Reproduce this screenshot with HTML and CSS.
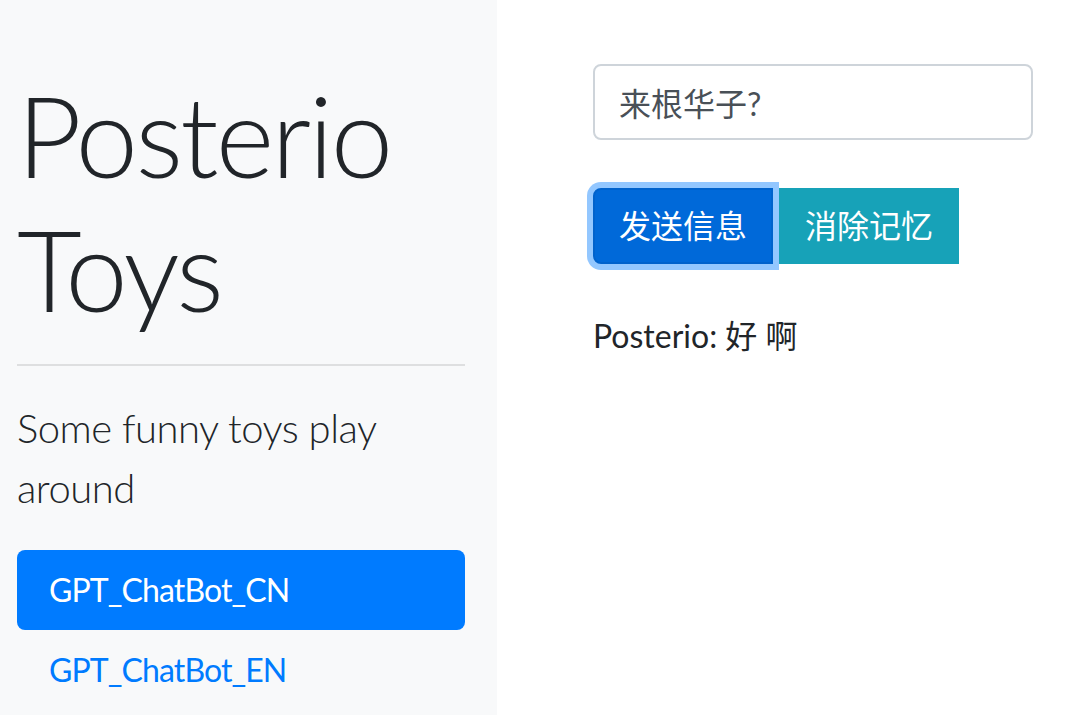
FILE: index.html
```html
<!DOCTYPE html>
<html lang="zh">
<head>
<meta charset="utf-8">
<title>Posterio Toys</title>
<link rel="stylesheet" href="styles.css">
</head>
<body>
<div class="layout">
  <aside class="sidebar">
    <h1 class="display">Posterio Toys</h1>
    <hr class="divider">
    <p class="lead">Some funny toys play around</p>
    <nav class="nav">
      <a class="nav-link active" href="#">GPT_ChatBot_CN</a>
      <a class="nav-link" href="#">GPT_ChatBot_EN</a>
    </nav>
  </aside>
  <main class="main">
    <input class="form-control" type="text" value="来根华子?">
    <div class="actions">
      <button class="btn btn-primary" type="button">发送信息</button>
      <button class="btn btn-info" type="button">消除记忆</button>
    </div>
    <p class="reply">Posterio: 好 啊</p>
  </main>
</div>
</body>
</html>
```
FILE: styles.css
```css
* { box-sizing: border-box; }
html, body { margin: 0; padding: 0; }
body {
  font-family: "Lato", "Noto Sans CJK SC", sans-serif;
  color: #212529;
  background: #fff;
  font-size: 32px;
  line-height: 1.5;
}
.layout {
  display: flex;
  min-height: 715px;
}
.sidebar {
  width: 497px;
  flex: 0 0 497px;
  background: #f8f9fa;
  padding: 68px 32px 0 17px;
}
.display {
  font-size: 112px;
  font-weight: 300;
  line-height: 1.2;
  letter-spacing: -2.7px;
  margin: 0 0 16px;
}
.divider {
  border: 0;
  border-top: 2px solid rgba(0,0,0,.1);
  margin: 27px 0 32px;
}
.lead {
  font-size: 40px;
  font-weight: 300;
  line-height: 1.5;
  letter-spacing: -0.5px;
  margin: 0 0 32px;
}
.nav { display: flex; flex-direction: column; }
.nav-link {
  display: block;
  padding: 16px 32px;
  line-height: 48px;
  letter-spacing: -0.9px;
  color: #007bff;
  text-decoration: none;
  border-radius: 8px;
}
.nav-link.active {
  background: #007bff;
  color: #fff;
}
.main {
  flex: 1;
  padding: 64px 34px 0 96px;
}
.form-control {
  display: block;
  width: 100%;
  height: 76px;
  padding: 12px 24px;
  font: inherit;
  font-size: 32px;
  line-height: 48px;
  color: #495057;
  background: #fff;
  border: 2px solid #ced4da;
  border-radius: 8px;
  outline: none;
}
.actions {
  display: flex;
  gap: 6px;
  margin-top: 48px;
}
.btn {
  font: inherit;
  font-size: 32px;
  line-height: 48px;
  padding: 12px 24px;
  color: #fff;
  border: 2px solid transparent;
  border-radius: 0;
}
.btn-primary {
  background: #0069d9;
  border-color: #0062cc;
  border-radius: 8px 0 0 8px;
  box-shadow: 0 0 0 6px #93c7ff;
  position: relative;
  z-index: 1;
}
.btn-info {
  background: #17a2b8;
  border-color: #17a2b8;
}
.reply {
  margin: 48px 0 0;
}
```
